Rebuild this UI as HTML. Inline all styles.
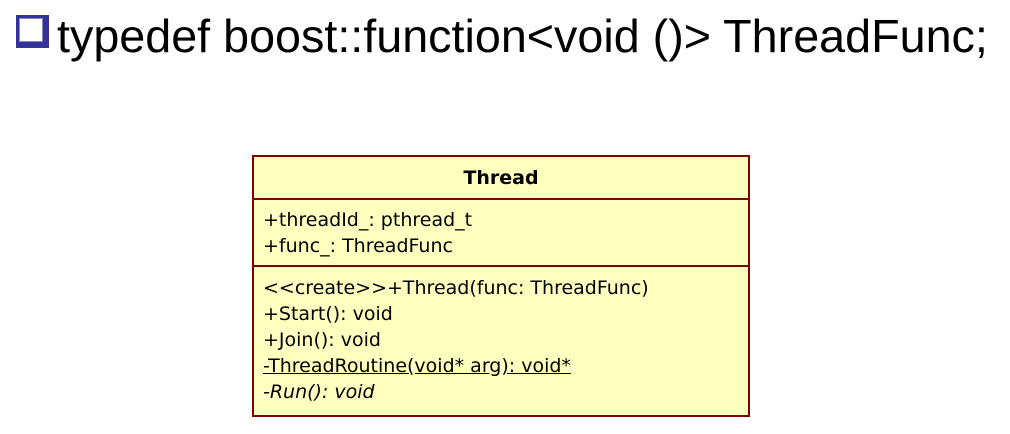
<!DOCTYPE html>
<html><head><meta charset="utf-8"><style>
html,body{margin:0;padding:0;background:#fff;width:1010px;height:434px;overflow:hidden;position:relative}
.chk{position:absolute;left:16px;top:15px;width:33px;height:33px;background:#333399;}
.chk::after{content:"";position:absolute;left:3px;top:3px;width:24px;height:24px;background:#fff;border:1px solid #8888bb;box-sizing:border-box}
.title{position:absolute;left:57px;top:9px;font:46.7px "Liberation Sans",Arial,sans-serif;color:#000;white-space:nowrap;line-height:54px}
.box{position:absolute;left:252px;top:155px;width:498px;height:262px;box-sizing:border-box;border:2px solid #800000;background:#ffffc0;font-family:"DejaVu Sans",Tahoma,sans-serif;font-size:19px;color:#000}
.hd{height:41px;border-bottom:2px solid #800000;text-align:center;font-weight:bold;line-height:42px;font-size:19px}
.sec{padding-left:9px;}
.attr{height:67px;border-bottom:2px solid #800000;padding-top:7px;box-sizing:border-box}
.l{height:26px;line-height:26px;white-space:nowrap}
.ops{padding-top:8px}
.u{text-decoration:underline}
.i{font-style:italic}
</style></head><body>
<div class="chk"></div>
<div class="title">typedef boost::function&lt;void ()&gt; ThreadFunc;</div>
<div class="box">
<div class="hd">Thread</div>
<div class="sec attr"><div class="l">+threadId_: pthread_t</div><div class="l">+func_: ThreadFunc</div></div>
<div class="sec ops">
<div class="l">&lt;&lt;create&gt;&gt;+Thread(func: ThreadFunc)</div>
<div class="l">+Start(): void</div>
<div class="l">+Join(): void</div>
<div class="l"><span class="u">-ThreadRoutine(void* arg): void*</span></div>
<div class="l i">-Run(): void</div>
</div>
</div>
</body></html>
